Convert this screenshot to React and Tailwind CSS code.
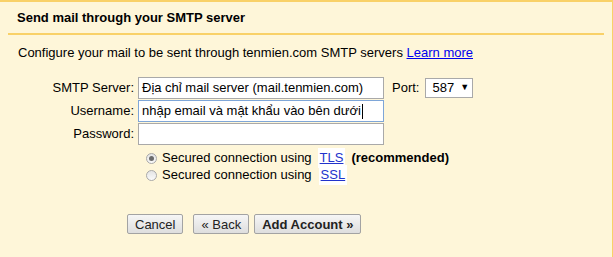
import React from "react";

const font = { fontFamily: '"Liberation Sans", Arial, sans-serif' };

const Radio = ({ checked }) => (
  <span className="relative inline-block w-[11px] h-[11px] rounded-full border border-[#a9a9a9] bg-gradient-to-b from-[#e4e4e4] to-[#fafafa] shrink-0">
    {checked && (
      <span className="absolute left-[2px] top-[2px] w-[5px] h-[5px] rounded-full bg-[#6b6b6b]"></span>
    )}
  </span>
);

const Button = ({ children, bold }) => (
  <button
    className={`h-[20px] px-[7px] border border-[#a3a3a3] rounded-[2px] bg-gradient-to-b from-[#f6f6f6] to-[#dedede] text-[13px] leading-none text-[#222] ${
      bold ? "font-bold" : ""
    }`}
  >
    {children}
  </button>
);

export default function App() {
  return (
    <div
      style={font}
      className="w-[613px] h-[257px] bg-[#fef6d9] border-t-2 border-r border-[#f9d168] text-[13px] text-black"
    >
      {/* Header */}
      <div className="mx-[8px] border-b-2 border-[#f9d168] pl-[9px] pt-[6px] h-[33px]">
        <span className="font-bold text-[13px] leading-[16px]">
          Send mail through your SMTP server
        </span>
      </div>

      {/* Intro */}
      <div className="pl-[18px] pt-[10px] leading-[16px]">
        Configure your mail to be sent through tenmien.com SMTP servers{" "}
        <a className="text-[#0000ee] underline">Learn more</a>
      </div>

      {/* Form */}
      <div className="mt-[16px] grid grid-cols-[135px_auto] gap-y-[1px] items-center">
        <div className="text-right pr-[1px]">SMTP Server:</div>
        <div className="flex items-center pl-[3px]">
          <div className="w-[246px] h-[22px] border border-[#a9a9a9] bg-white pl-[3px] flex items-center">
            Địa chỉ mail server (mail.tenmien.com)
          </div>
          <span className="ml-[8px]">Port:</span>
          <div className="ml-[6px] w-[48px] h-[20px] border border-[#a9a9a9] bg-white flex items-center pl-[6px] gap-[6px]">
            <span>587</span>
            <span className="text-[9px]">▼</span>
          </div>
        </div>

        <div className="text-right pr-[1px]">Username:</div>
        <div className="pl-[3px]">
          <div className="w-[246px] h-[22px] border border-[#7ea6d8] bg-white pl-[3px] flex items-center">
            nhập email và mật khẩu vào bên dưới
            <span className="inline-block w-px h-[15px] bg-black ml-[1px]"></span>
          </div>
        </div>

        <div className="text-right pr-[1px]">Password:</div>
        <div className="pl-[3px]">
          <div className="w-[246px] h-[22px] border border-[#a9a9a9] bg-white"></div>
        </div>
      </div>

      {/* Security options */}
      <div className="pl-[146px] mt-[6px] flex flex-col gap-[3px]">
        <div className="flex items-center h-[14px]">
          <Radio checked />
          <span className="ml-[5px]">Secured connection using</span>
          <a className="ml-[6px] px-[2px] bg-white text-[#2233cc] underline">TLS</a>
          <span className="ml-[6px] font-bold">(recommended)</span>
        </div>
        <div className="flex items-center h-[14px]">
          <Radio />
          <span className="ml-[5px]">Secured connection using</span>
          <a className="ml-[7px] px-[2px] bg-white text-[#2233cc] underline">SSL</a>
        </div>
      </div>

      {/* Buttons */}
      <div className="pl-[127px] mt-[32px] flex items-center">
        <Button>Cancel</Button>
        <div className="ml-[10px] flex gap-[5px]">
          <Button>« Back</Button>
          <Button bold>Add Account »</Button>
        </div>
      </div>
    </div>
  );
}
